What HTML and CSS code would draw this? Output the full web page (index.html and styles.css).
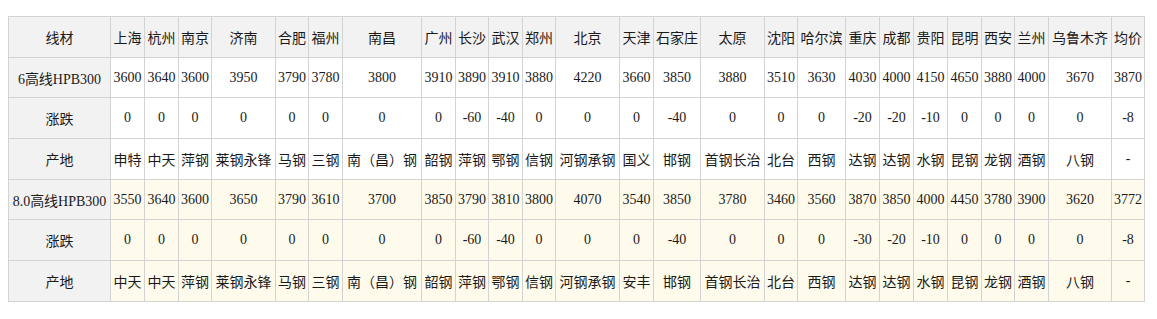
FILE: index.html
```html
<!DOCTYPE html>
<html lang="zh-CN">
<head>
<meta charset="utf-8">
<title>线材价格</title>
<link rel="stylesheet" href="styles.css">
</head>
<body>
<table class="price">
<colgroup>
<col style="width:102px"><col style="width:34px"><col style="width:34px"><col style="width:33px"><col style="width:64px"><col style="width:33px"><col style="width:34px"><col style="width:79px"><col style="width:34px"><col style="width:33px"><col style="width:34px"><col style="width:33px"><col style="width:64px"><col style="width:34px"><col style="width:47px"><col style="width:64px"><col style="width:33px"><col style="width:48px"><col style="width:34px"><col style="width:34px"><col style="width:34px"><col style="width:34px"><col style="width:33px"><col style="width:34px"><col style="width:63px"><col style="width:33px">
</colgroup>
<tr class="head">
<td>线材</td><td>上海</td><td>杭州</td><td>南京</td><td>济南</td><td>合肥</td><td>福州</td><td>南昌</td><td>广州</td><td>长沙</td><td>武汉</td><td>郑州</td><td>北京</td><td>天津</td><td>石家庄</td><td>太原</td><td>沈阳</td><td>哈尔滨</td><td>重庆</td><td>成都</td><td>贵阳</td><td>昆明</td><td>西安</td><td>兰州</td><td>乌鲁木齐</td><td>均价</td>
</tr>
<tr>
<td class="label">6高线HPB300</td><td>3600</td><td>3640</td><td>3600</td><td>3950</td><td>3790</td><td>3780</td><td>3800</td><td>3910</td><td>3890</td><td>3910</td><td>3880</td><td>4220</td><td>3660</td><td>3850</td><td>3880</td><td>3510</td><td>3630</td><td>4030</td><td>4000</td><td>4150</td><td>4650</td><td>3880</td><td>4000</td><td>3670</td><td>3870</td>
</tr>
<tr>
<td class="label">涨跌</td><td>0</td><td>0</td><td>0</td><td>0</td><td>0</td><td>0</td><td>0</td><td>0</td><td>-60</td><td>-40</td><td>0</td><td>0</td><td>0</td><td>-40</td><td>0</td><td>0</td><td>0</td><td>-20</td><td>-20</td><td>-10</td><td>0</td><td>0</td><td>0</td><td>0</td><td>-8</td>
</tr>
<tr>
<td class="label">产地</td><td>申特</td><td>中天</td><td>萍钢</td><td>莱钢永锋</td><td>马钢</td><td>三钢</td><td>南（昌）钢</td><td>韶钢</td><td>萍钢</td><td>鄂钢</td><td>信钢</td><td>河钢承钢</td><td>国义</td><td>邯钢</td><td>首钢长治</td><td>北台</td><td>西钢</td><td>达钢</td><td>达钢</td><td>水钢</td><td>昆钢</td><td>龙钢</td><td>酒钢</td><td>八钢</td><td>-</td>
</tr>
<tr class="alt">
<td class="label">8.0高线HPB300</td><td>3550</td><td>3640</td><td>3600</td><td>3650</td><td>3790</td><td>3610</td><td>3700</td><td>3850</td><td>3790</td><td>3810</td><td>3800</td><td>4070</td><td>3540</td><td>3850</td><td>3780</td><td>3460</td><td>3560</td><td>3870</td><td>3850</td><td>4000</td><td>4450</td><td>3780</td><td>3900</td><td>3620</td><td>3772</td>
</tr>
<tr class="alt">
<td class="label">涨跌</td><td>0</td><td>0</td><td>0</td><td>0</td><td>0</td><td>0</td><td>0</td><td>0</td><td>-60</td><td>-40</td><td>0</td><td>0</td><td>0</td><td>-40</td><td>0</td><td>0</td><td>0</td><td>-30</td><td>-20</td><td>-10</td><td>0</td><td>0</td><td>0</td><td>0</td><td>-8</td>
</tr>
<tr class="alt">
<td class="label">产地</td><td>中天</td><td>中天</td><td>萍钢</td><td>莱钢永锋</td><td>马钢</td><td>三钢</td><td>南（昌）钢</td><td>韶钢</td><td>萍钢</td><td>鄂钢</td><td>信钢</td><td>河钢承钢</td><td>安丰</td><td>邯钢</td><td>首钢长治</td><td>北台</td><td>西钢</td><td>达钢</td><td>达钢</td><td>水钢</td><td>昆钢</td><td>龙钢</td><td>酒钢</td><td>八钢</td><td>-</td>
</tr>
</table>
</body>
</html>
```
FILE: styles.css
```css
html, body {
  background: #ffffff;
}
body {
  margin: 8px;
  font-family: "Liberation Serif", "Noto Sans CJK SC", serif;
  font-size: 14px;
  color: #1a1a1a;
}
.price {
  margin-top: 8px;
  width: 1136px;
  table-layout: fixed;
  border-collapse: collapse;
}
.price td {
  border: 1px solid #d3d3d3;
  height: 39.7px;
  padding: 0;
  text-align: center;
  vertical-align: middle;
  white-space: nowrap;
  overflow: hidden;
  background: #ffffff;
}
.price .head td {
  background: #f2f2f2;
}
.price td.label {
  background: #f2f2f2;
}
.price .alt td {
  background: #fefbec;
}
.price .alt td.label {
  background: #f2f2f2;
}
```
